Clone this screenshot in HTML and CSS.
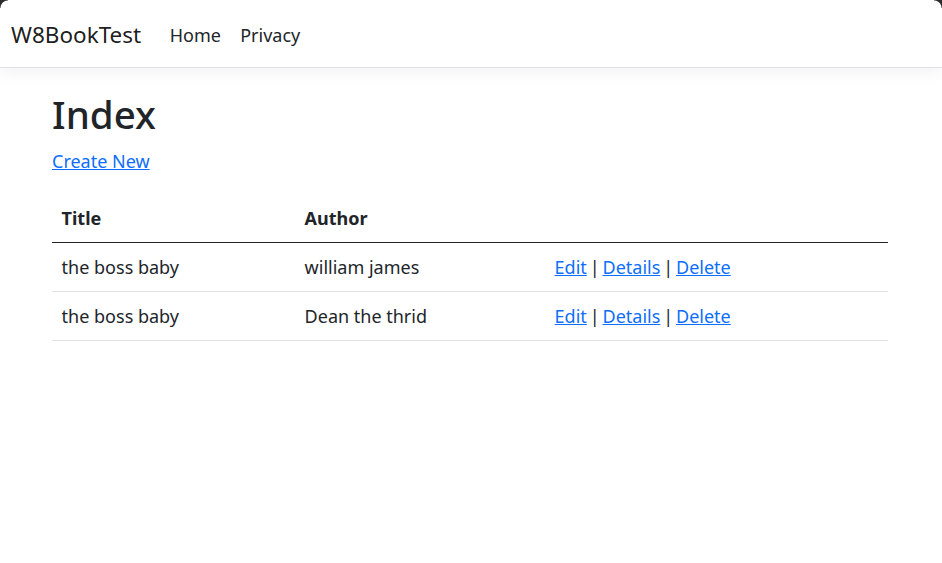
FILE: index.html
```html
<!DOCTYPE html>
<html lang="en">
<head>
<meta charset="utf-8">
<title>Index - W8BookTest</title>
<link rel="stylesheet" href="styles.css">
</head>
<body>
<span class="corner corner-left"></span>
<span class="corner corner-right"></span>
<header>
  <nav class="navbar">
    <a class="brand" href="#">W8BookTest</a>
    <ul class="nav">
      <li><a class="nav-link" href="#">Home</a></li>
      <li><a class="nav-link" href="#">Privacy</a></li>
    </ul>
  </nav>
</header>
<main class="container">
  <h1>Index</h1>
  <p class="create"><a href="#">Create New</a></p>
  <table class="table">
    <thead>
      <tr>
        <th class="col-title">Title</th>
        <th class="col-author">Author</th>
        <th class="col-actions"></th>
      </tr>
    </thead>
    <tbody>
      <tr>
        <td>the boss baby</td>
        <td>william james</td>
        <td class="actions"><a href="#">Edit</a> | <a href="#">Details</a> | <a href="#">Delete</a></td>
      </tr>
      <tr>
        <td>the boss baby</td>
        <td>Dean the thrid</td>
        <td class="actions"><a href="#">Edit</a> | <a href="#">Details</a> | <a href="#">Delete</a></td>
      </tr>
    </tbody>
  </table>
</main>
</body>
</html>
```
FILE: styles.css
```css
* { box-sizing: border-box; }
html, body { margin: 0; padding: 0; }
body {
  font-family: "Noto Sans", "Open Sans", sans-serif;
  font-size: 19.2px;
  line-height: 1.5;
  color: #212529;
  background: #fff;
}
a { color: #0d6efd; }

.corner {
  position: fixed;
  top: 0;
  width: 8px;
  height: 8px;
  z-index: 10;
}
.corner-left { left: 0; background: radial-gradient(circle at 8px 8px, transparent 7px, #2b2b2b 8px); }
.corner-right { right: 0; background: radial-gradient(circle at 0 8px, transparent 7px, #2b2b2b 8px); }

.navbar {
  display: flex;
  align-items: center;
  height: 68px;
  padding: 3px 11px 0;
  border-bottom: 1px solid #dee2e6;
  box-shadow: 0 4.8px 14.4px rgba(0,0,0,.05);
  background: #fff;
}
.brand {
  font-size: 22.5px;
  color: rgba(0,0,0,.9);
  text-decoration: none;
  margin-right: 19px;
  line-height: 1;
}
.nav {
  display: flex;
  list-style: none;
  margin: 0;
  padding: 0;
}
.nav-link {
  display: block;
  padding: 0 9.6px;
  font-size: 18px;
  color: #212529;
  text-decoration: none;
}

.container {
  padding: 23px 54px 0 52px;
}
h1 {
  margin: 0 0 10px;
  font-size: 38.5px;
  font-weight: 500;
  line-height: 1.2;
}
.create {
  margin: 0 0 18px;
  font-size: 18px;
  line-height: 28.8px;
}
.table {
  width: 100%;
  border-collapse: collapse;
  font-size: 18px;
  line-height: 28.8px;
}
.table th, .table td {
  padding: 9.6px;
  text-align: left;
  vertical-align: top;
  border-bottom: 1px solid #dee2e6;
}
.table th { font-weight: 700; }
.table thead th { border-bottom: 1px solid #212529; }
.col-title { width: 243px; }
.col-author { width: 250px; }
.actions { word-spacing: -1.8px; }
```
